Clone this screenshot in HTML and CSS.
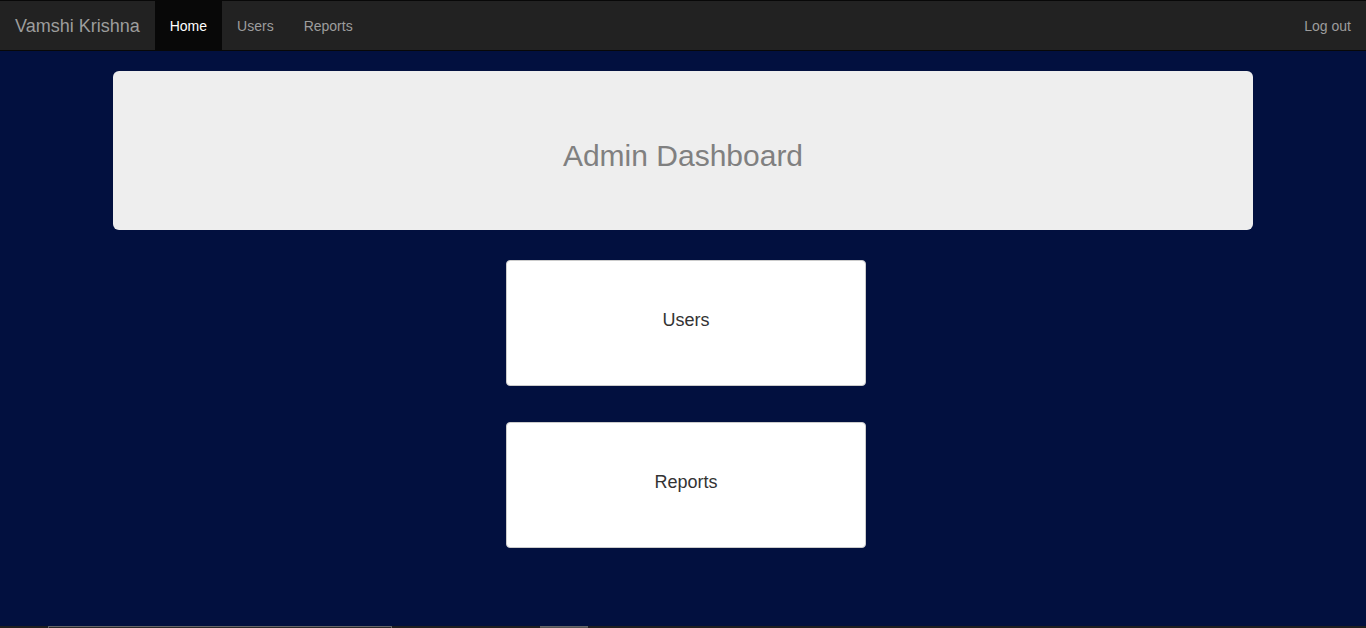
FILE: index.html
```html
<!DOCTYPE html>
<html lang="en">
<head>
<meta charset="utf-8">
<title>Admin Dashboard</title>
<link rel="stylesheet" href="styles.css">
</head>
<body>
<nav class="navbar">
  <div class="nav-left">
    <a class="brand" href="#">Vamshi Krishna</a>
    <ul class="nav">
      <li class="active"><a href="#">Home</a></li>
      <li><a href="#">Users</a></li>
      <li><a href="#">Reports</a></li>
    </ul>
  </div>
  <ul class="nav">
    <li><a href="#">Log out</a></li>
  </ul>
</nav>
<main class="container">
  <div class="jumbotron">
    <h2>Admin Dashboard</h2>
  </div>
  <div class="cards">
    <a class="card" href="#">Users</a>
    <a class="card" href="#">Reports</a>
  </div>
</main>
<footer class="footer">
  <div class="fbox fbox-wide"></div>
  <div class="fbox fbox-small"></div>
</footer>
</body>
</html>
```
FILE: styles.css
```css
* { box-sizing: border-box; }
html, body { margin: 0; padding: 0; }
body {
  background: #02103f;
  font-family: "Liberation Sans", Arial, Helvetica, sans-serif;
  font-size: 14px;
  color: #333;
  overflow: hidden;
}
a { text-decoration: none; }
.navbar {
  display: flex;
  justify-content: space-between;
  background: #222;
  border-top: 1px solid #080808;
  border-bottom: 1px solid #080808;
  height: 51px;
}
.nav-left { display: flex; }
.brand {
  color: #9d9d9d;
  font-size: 18px;
  line-height: 47px;
  padding: 2px 15px 0;
}
.nav {
  list-style: none;
  margin: 0;
  padding: 0;
  display: flex;
}
.nav li a {
  display: block;
  color: #9d9d9d;
  line-height: 47px;
  padding: 2px 15px 0;
}
.nav li.active a {
  background: #080808;
  color: #fff;
}
.container {
  width: 1140px;
  margin: 20px auto 0;
}
.jumbotron {
  background: #eee;
  border-radius: 6px;
  padding: 48px 0;
  text-align: center;
}
.jumbotron h2 {
  margin: 20px 0 10px;
  font-size: 30px;
  font-weight: 400;
  line-height: 33px;
  color: #808080;
}
.cards {
  display: flex;
  flex-direction: column;
  align-items: center;
  gap: 36px;
  margin-top: 30px;
  padding-left: 6px;
}
.card {
  display: flex;
  align-items: center;
  justify-content: center;
  width: 360px;
  height: 126px;
  background: #fff;
  border: 1px solid #ccc;
  border-radius: 4px;
  color: #333;
  font-size: 18px;
  padding-bottom: 6px;
}
.footer {
  margin-top: 78px;
  height: 40px;
  background: #1f1f1f;
  display: flex;
  align-items: flex-start;
}
.fbox {
  height: 30px;
  border-top: 1px solid #666;
  background: #2a2a2a;
}
.fbox-wide { margin-left: 48px; width: 344px; border-left: 1px solid #666; border-right: 1px solid #666; }
.fbox-small { margin-left: 148px; width: 48px; background: #555; }
```
